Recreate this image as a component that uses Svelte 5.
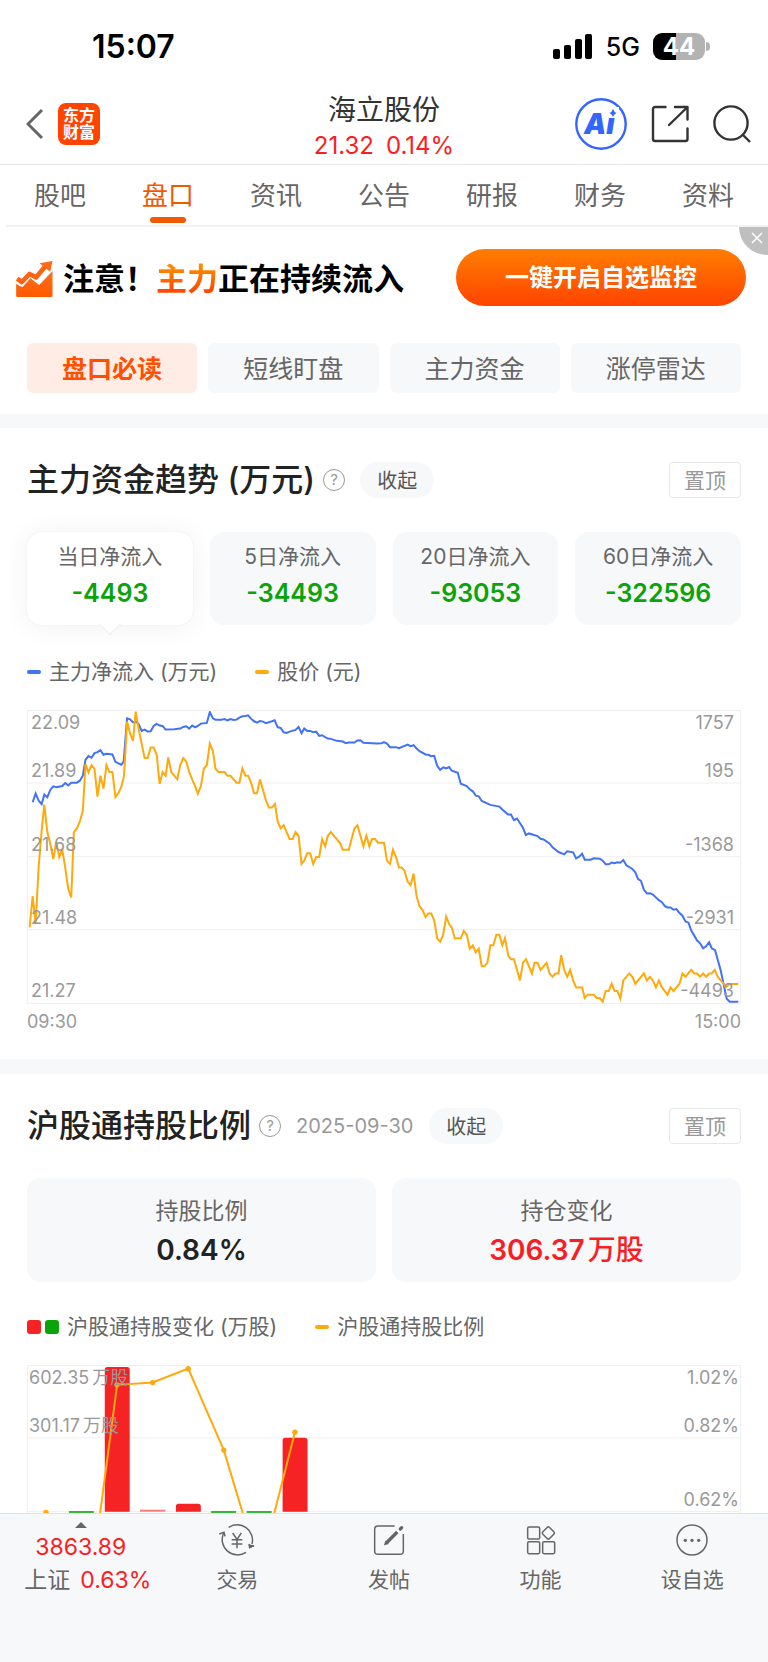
<script>
  const tabs = ['股吧', '盘口', '资讯', '公告', '研报', '财务', '资料'];
  const chips = ['盘口必读', '短线盯盘', '主力资金', '涨停雷达'];
  const flows = [
    { label: '当日净流入', value: '-4493' },
    { label: '5日净流入', value: '-34493' },
    { label: '20日净流入', value: '-93053' },
    { label: '60日净流入', value: '-322596' }
  ];
  let tab = $state('盘口');
  let chip = $state('盘口必读');
  let flow = $state('当日净流入');

  const trendRows = [
    ['21.89', '195'],
    ['21.68', '-1368'],
    ['21.48', '-2931'],
    ['21.27', '-4493']
  ];

  const price =
    '86,682 95,588 104,672 113,500 122,392 130,312 139,394 148,430 157,476 166,424 175,470 184,448 193,502 202,566 211,592 219,395 228,384 237,363 246,331 254,190 263,215 272,193 281,204 290,288 299,225 308,264 317,193 326,214 335,214 344,289 353,278 362,257 370,225 379,62 388,97 397,120 405,32 414,85 423,129 432,172 441,172 450,140 459,140 468,161 477,250 486,214 495,225 503,170 512,214 521,225 530,236 539,193 548,172 557,182 566,214 575,236 584,257 592,279 601,257 610,204 619,193 628,128 637,150 645,204 654,214 672,214 681,225 690,225 708,246 717,246 726,203 735,225 743,225 752,246 761,278 770,278 779,236 788,268 797,300 806,321 815,321 824,310 832,363 841,384 850,374 868,416 877,416 886,395 895,406 904,491 912,481 921,459 930,459 939,491 948,470 957,470 966,416 975,438 983,406 992,395 1019,427 1028,448 1046,448 1063,384 1072,374 1090,438 1099,406 1108,438 1116,416 1125,416 1134,427 1152,427 1161,481 1170,491 1179,448 1188,470 1197,502 1205,502 1214,512 1223,544 1232,555 1241,520 1250,588 1259,619 1268,630 1277,651 1285,640 1294,640 1303,661 1312,715 1321,725 1330,704 1339,650 1348,672 1356,683 1365,715 1383,715 1392,693 1401,704 1410,746 1419,736 1428,757 1437,746 1446,799 1454,799 1463,789 1472,736 1481,736 1490,704 1499,704 1508,736 1516,714 1526,768 1534,778 1543,778 1561,842 1570,789 1579,778 1597,821 1605,789 1614,789 1623,810 1641,789 1650,821 1659,831 1668,821 1677,821 1685,766 1694,810 1703,831 1712,810 1721,842 1730,863 1748,863 1756,895 1765,885 1783,885 1792,895 1801,895 1810,906 1819,874 1828,874 1837,852 1846,874 1854,874 1863,896 1872,842 1890,821 1899,831 1908,852 1934,821 1943,842 1952,831 1961,842 1970,863 1979,842 1988,863 2005,885 2014,863 2023,874 2032,863 2041,852 2050,821 2059,831 2076,810 2085,821 2094,821 2103,831 2112,821 2121,831 2130,821 2138,821 2147,810 2156,831 2165,842 2174,852 2180,863 2192,853 2218,853';

  const inflow =
    '95,305 104,279 113,300 122,311 130,282 139,290 148,268 157,257 166,260 184,256 193,247 202,254 211,246 228,246 237,240 246,225 254,177 263,166 272,171 281,157 290,154 299,148 308,162 317,159 335,161 344,183 353,188 362,192 369,182 379,52 388,55 397,64 408,63 414,70 423,90 432,86 441,92 450,91 459,75 468,69 477,74 486,75 495,86 521,85 539,83 548,78 557,76 566,83 575,74 584,79 592,75 601,68 619,66 628,33 637,52 645,56 663,56 672,54 681,58 690,54 699,57 708,56 717,50 726,46 735,45 743,43 752,53 761,61 770,65 779,60 788,62 797,67 815,61 823,58 832,79 841,81 850,94 859,96 868,92 886,87 895,78 904,97 912,83 921,90 930,90 939,94 948,92 957,105 966,103 975,109 983,113 992,114 1010,120 1028,122 1037,127 1046,125 1063,125 1072,119 1081,118 1090,126 1130,128 1145,127 1152,124 1161,128 1170,139 1188,139 1197,142 1223,131 1232,136 1241,133 1250,143 1259,151 1277,161 1285,162 1294,166 1303,165 1312,195 1321,207 1330,200 1339,203 1348,199 1356,210 1374,216 1383,249 1401,256 1410,266 1419,272 1428,285 1437,287 1446,301 1472,313 1499,318 1508,327 1525,342 1534,342 1543,359 1552,354 1570,382 1579,404 1588,399 1614,407 1623,415 1632,417 1650,429 1659,441 1677,455 1694,462 1703,453 1721,456 1730,474 1739,469 1748,460 1756,478 1774,478 1783,474 1801,475 1810,481 1819,492 1828,492 1837,487 1846,489 1854,486 1863,487 1872,479 1881,495 1899,506 1908,516 1916,536 1925,542 1934,569 1943,580 1952,579 1961,583 1979,600 1988,606 1997,618 2005,622 2014,622 2023,629 2032,627 2041,639 2050,647 2059,664 2068,668 2076,691 2094,722 2103,730 2112,745 2121,739 2130,727 2138,745 2148,751 2165,812 2183,897 2192,906 2218,906';

  const bars = [
    { x: 312, y: 78, tone: 'up' },
    { x: 526, y: 491, tone: 'up' },
    { x: 847, y: 292, tone: 'up' }
  ];
  const flatBars = [
    { x: 204, tone: 'down' },
    { x: 632, tone: 'down' },
    { x: 739, tone: 'down' }
  ];
  const dots = [[135, 517], [349, 132], [456, 125], [563, 83], [670, 329], [884, 275]];
</script>

<div class="app">
  <div class="status">
    <time>15:07</time>
    <div class="signals">
      <svg class="cell" viewBox="0 0 40 26" aria-hidden="true">
        <rect x="0" y="15" width="7" height="10" rx="2" />
        <rect x="11" y="11" width="7" height="14" rx="2" />
        <rect x="22" y="5" width="7" height="20" rx="2" />
        <rect x="32" y="0" width="7" height="25" rx="2" />
      </svg>
      <span class="net">5G</span>
      <span class="battery">44</span>
    </div>
  </div>

  <header class="top">
    <div class="side start">
      <button class="icon" aria-label="返回">
        <svg width="18" height="32" viewBox="0 0 18 32"><path d="M16 2 2 16l14 14" fill="none" stroke="#666" stroke-width="3" /></svg>
      </button>
      <a class="logo" href="#home">东方<br />财富</a>
    </div>
    <div class="stock">
      <h1>海立股份</h1>
      <p><span>21.32</span><span>0.14%</span></p>
    </div>
    <div class="side end">
      <button class="icon" aria-label="智能助手">
        <svg width="52" height="52" viewBox="0 0 52 52">
          <circle cx="26" cy="26" r="24.7" fill="none" stroke="#36f" stroke-width="2.4" />
          <text x="9" y="36" class="ai">Ai</text>
          <rect x="32" y="9" width="12" height="10" fill="#fff" />
          <path d="M38 11q1 3 3.500 4-2.500 1-3.500 4-1-3-3.500-4 2.500-1 3.500-4Z" fill="#36f" />
        </svg>
      </button>
      <button class="icon" aria-label="分享">
        <svg width="38" height="38" viewBox="0 0 38 38" fill="none" stroke="#333" stroke-width="2.4" stroke-linecap="round" stroke-linejoin="round">
          <path d="M14.500 2H4a2 2 0 0 0-2 2v30a2 2 0 0 0 2 2h30.500a2 2 0 0 0 2-2V23.500M24 2h12.500v12.500M36 2.500 18 20" />
        </svg>
      </button>
      <button class="icon" aria-label="搜索">
        <svg width="38" height="38" viewBox="0 0 38 38" fill="none" stroke="#333" stroke-width="2.400">
          <circle cx="18" cy="18" r="16.600" /><path d="m29.500 29.500 7.500 7.500" />
        </svg>
      </button>
    </div>
  </header>

  <nav class="tabs">
    {#each tabs as t}
      <button class:active={t === tab} onclick={() => (tab = t)}>{t}</button>
    {/each}
  </nav>

  <main>
    <div class="banner">
      <svg class="surge" viewBox="48 120 110 108" aria-hidden="true">
        <defs>
          <linearGradient id="surge-fill" x1="0" y1="0" x2="0" y2="1">
            <stop offset="0" stop-color="#ff6d1a" /><stop offset="1" stop-color="#ff5a00" />
          </linearGradient>
        </defs>
        <path d="m51 173 14 10 23-24 20 10 30-36" fill="none" stroke="#ff6210" stroke-width="14" stroke-linejoin="round" />
        <path d="m118 127 39-7-7 32Z" fill="#ff6a18" />
        <path d="M48 188q10 8 19 10l24-26 26 20 40-42v74q0 4-4 4H52q-4 0-4-4Z" fill="url(#surge-fill)" />
      </svg>
      <p>注意！<em>主力</em>正在持续流入</p>
      <button class="cta">一键开启自选监控</button>
      <button class="close" aria-label="关闭">
        <svg width="12" height="12" viewBox="0 0 12 12"><path d="m1 1 10 10M11 1 1 11" stroke="#fff" stroke-width="1.500" /></svg>
      </button>
    </div>

    <div class="chips">
      {#each chips as c}
        <button class:active={c === chip} onclick={() => (chip = c)}>{c}</button>
      {/each}
    </div>

    <section>
      <div class="heading">
        <h2>主力资金趋势 (万元)</h2>
        <button class="help" aria-label="说明">?</button>
        <button class="fold">收起</button>
        <button class="pin">置顶</button>
      </div>
      <div class="flows">
        {#each flows as f}
          <button class:active={f.label === flow} onclick={() => (flow = f.label)}>
            <span>{f.label}</span><strong>{f.value}</strong>
          </button>
        {/each}
      </div>
      <div class="legend">
        <span class="key blue">主力净流入 (万元)</span>
        <span class="key amber">股价 (元)</span>
      </div>
      <div class="plot trend">
        <svg viewBox="81 30 2142 880" preserveAspectRatio="none" aria-hidden="true">
          <path class="rule" d="M81 247h2142M81 469h2142M81 689h2142" />
          <polyline class="line inflow" points={inflow} />
          <polyline class="line price" points={price} />
        </svg>
        <div class="scale">
          <div class="row first"><span>22.09</span><span>1757</span></div>
          {#each trendRows as [left, right]}
            <div class="row"><span>{left}</span><span>{right}</span></div>
          {/each}
        </div>
      </div>
      <div class="times"><span>09:30</span><span>15:00</span></div>
    </section>

    <section>
      <div class="heading">
        <h2>沪股通持股比例</h2>
        <button class="help" aria-label="说明">?</button>
        <time>2025-09-30</time>
        <button class="fold">收起</button>
        <button class="pin">置顶</button>
      </div>
      <dl class="holdings">
        <div><dt>持股比例</dt><dd>0.84%</dd></div>
        <div><dt>持仓变化</dt><dd class="rise">306.37<span class="unit">万股</span></dd></div>
      </dl>
      <div class="legend">
        <span class="key pair"><i></i>沪股通持股变化 (万股)</span>
        <span class="key amber">沪股通持股比例</span>
      </div>
      <div class="plot share">
        <svg viewBox="81 75 2142 444" preserveAspectRatio="none" aria-hidden="true">
          <path class="rule" d="M81 292h2142M81 515h2142" />
          {#each bars as b}
            <path class={b.tone} d="M{b.x} 515V{b.y + 8}q0-8 8-8h59q8 0 8 8V515Z" />
          {/each}
          <rect class="faint" x="418" y="509" width="76" height="6" />
          {#each flatBars as b}
            <rect class={b.tone} x={b.x} y="513" width="75" height="6" opacity="0.8" />
          {/each}
          <path class="line price" d="M298 519 349 132 456 125 563 83 670 329 727 519M822 519 884 275" />
          {#each dots as [x, y]}
            <circle class="dot" cx={x} cy={y} r="8" />
          {/each}
        </svg>
        <div class="scale">
          <div class="row first"><span>602.35<span class="unit">万股</span></span><span>1.02%</span></div>
          <div class="row"><span>301.17<span class="unit">万股</span></span><span>0.82%</span></div>
          <div class="row"><span></span><span>0.62%</span></div>
        </div>
      </div>
    </section>
  </main>

  <footer>
    <button class="index">
      <svg width="12" height="6" viewBox="0 0 12 6"><path d="M0 6 6 0l6 6Z" fill="#666" /></svg>
      <span class="rise">3863.89</span>
      <span class="change">上证<b>0.63%</b></span>
    </button>
    <button>
      <svg viewBox="658 544 108 108">
        <path d="M687 560a46 46 0 0 1 70 50M739 635a46 46 0 0 1-67-58" />
        <path d="m659 580 14-5 3 12M750 620l13-5" />
        <path d="m748 610 2 11 13-6" fill="#666" />
        <path d="m699 577 13 19 13-19M712 596v27M696 597h32M696 610h32" />
      </svg>
      <span>交易</span>
    </button>
    <button>
      <svg viewBox="1114 544 108 108">
        <path d="M1185 556h-50q-10 0-10 10v65q0 10 10 10h66q10 0 10-10v-51" />
        <path d="m1160 607 33-33" stroke-width="10" />
        <path d="m1154 613 4-12 8 8Z" fill="#666" stroke-width="2" />
        <path d="m1202 565 4-4" stroke-width="10" stroke-linecap="round" />
      </svg>
      <span>发帖</span>
    </button>
    <button>
      <svg viewBox="416 544 108 108">
        <rect x="430" y="559" width="36" height="36" rx="4" />
        <rect x="430" y="603" width="36" height="36" rx="4" />
        <rect x="475" y="603" width="36" height="36" rx="4" />
        <rect x="478" y="563" width="28" height="28" rx="4" transform="rotate(45 492 577)" />
      </svg>
      <span>功能</span>
    </button>
    <button>
      <svg viewBox="870 544 108 108">
        <circle cx="924" cy="598" r="45" />
        <g fill="#666" stroke="none"><circle cx="904" cy="599" r="5" /><circle cx="924" cy="599" r="5" /><circle cx="944" cy="599" r="5" /></g>
      </svg>
      <span>设自选</span>
    </button>
  </footer>
</div>

<style>
  :global(body) {
    margin: 0;
    background: #fff;
  }
  .app {
    display: flex;
    flex-direction: column;
    height: 100vh;
    overflow: hidden;
    color: #666;
    font-family: Inter, 'Noto Sans CJK SC', sans-serif;
    font-size: 21px;
  }
  .app * {
    box-sizing: border-box;
  }
  button {
    margin: 0;
    padding: 0;
    border: 0;
    background: none;
    color: inherit;
    font: inherit;
    white-space: nowrap;
    cursor: pointer;
  }
  h1,
  h2,
  p,
  dl,
  dd {
    margin: 0;
  }
  svg {
    display: block;
  }
  main {
    flex: 1;
    min-height: 0;
    overflow: hidden;
  }

  .status {
    display: flex;
    flex: none;
    align-items: center;
    justify-content: space-between;
    height: 85px;
    padding: 8px 63px 0 92px;
    color: #000;
  }
  .status time {
    font-size: 32px;
    font-weight: 600;
  }
  .signals {
    display: flex;
    align-items: center;
    gap: 13px;
  }
  .cell {
    width: 40px;
    height: 26px;
  }
  .net {
    font-size: 25px;
    font-weight: 500;
  }
  .battery {
    position: relative;
    width: 52px;
    height: 27px;
    border-radius: 9px;
    background: linear-gradient(90deg, #000 44%, #b3b3b3 44%);
    color: #fff;
    font-size: 24px;
    font-weight: 700;
    line-height: 27px;
    text-align: center;
  }
  .battery::after {
    content: '';
    position: absolute;
    top: 9px;
    right: -5px;
    width: 4px;
    height: 9px;
    border-radius: 0 4px 4px 0;
    background: #b3b3b3;
  }

  .top {
    display: grid;
    grid-template-columns: 1fr auto 1fr;
    flex: none;
    align-items: center;
    height: 80px;
    padding: 0 17px;
    border-bottom: 1px solid #e6e6e6;
  }
  .side {
    display: flex;
    align-items: center;
    gap: 14px;
    padding-bottom: 2px;
  }
  .start {
    padding-left: 9px;
  }
  .end {
    justify-content: flex-end;
    gap: 24px;
  }
  .logo {
    padding: 4px 5px;
    border-radius: 8px;
    background: #ff4400;
    color: #fff;
    font-size: 16px;
    font-weight: 700;
    line-height: 17px;
    text-decoration: none;
  }
  .ai {
    fill: #36f;
    font-size: 28px;
    font-style: italic;
    font-weight: 900;
  }
  .stock {
    padding-top: 2px;
    text-align: center;
  }
  .stock h1 {
    color: #333;
    font-size: 28px;
    font-weight: 400;
    line-height: 40px;
  }
  .stock p {
    display: flex;
    justify-content: center;
    gap: 12px;
    color: #fa1e24;
    font-size: 24px;
    line-height: 32px;
  }

  .tabs {
    display: grid;
    grid-template-columns: repeat(7, 1fr);
    flex: none;
    height: 62px;
    margin-left: 6px;
    padding-right: 6px;
    border-bottom: 2px solid #f2f2f2;
  }
  .tabs button {
    position: relative;
    padding-bottom: 3px;
    font-size: 26px;
  }
  .tabs .active {
    color: #ef5a00;
  }
  .tabs .active::after {
    content: '';
    position: absolute;
    bottom: 2px;
    left: 50%;
    width: 36px;
    height: 6px;
    margin-left: -18px;
    border-radius: 3px;
    background: #ef5a00;
  }

  .banner {
    position: relative;
    display: flex;
    align-items: center;
    height: 100px;
    padding: 0 22px 0 16px;
  }
  .surge {
    width: 37px;
    height: 36px;
    margin: 3px 10px 0 0;
  }
  .banner p {
    padding-top: 4px;
    color: #000;
    font-size: 31px;
    font-weight: 700;
    line-height: 48px;
    white-space: nowrap;
  }
  .banner em {
    background: linear-gradient(#ff8a00 20%, #ff4a00 80%);
    background-clip: text;
    color: transparent;
    font-style: normal;
  }
  .cta {
    width: 290px;
    height: 57px;
    margin-left: auto;
    padding-bottom: 4px;
    border-radius: 29px;
    background: linear-gradient(#ff7e00, #ff4400);
    color: #fff;
    font-size: 24px;
    font-weight: 700;
  }
  .close {
    position: absolute;
    top: 0;
    right: 0;
    display: grid;
    place-items: center;
    width: 29px;
    height: 28px;
    padding: 0 0 6px 6px;
    border-bottom-left-radius: 28px;
    background: #bfbfbf;
  }

  .chips {
    display: grid;
    grid-template-columns: repeat(4, 1fr);
    gap: 11px;
    padding: 16px 27px 21px;
  }
  .chips button {
    height: 50px;
    padding-bottom: 2px;
    border-radius: 6px;
    background: #f7f8fa;
    font-size: 25px;
  }
  .chips .active {
    background: #ffede5;
    color: #ff5000;
    font-weight: 700;
  }

  section {
    padding: 28px 27px 25px;
    border-top: 14px solid #f7f8fa;
  }
  section + section {
    padding-bottom: 0;
    border-top-width: 15px;
  }
  .heading {
    display: flex;
    align-items: center;
    height: 48px;
  }
  h2 {
    color: #222;
    font-size: 32px;
    font-weight: 500;
    line-height: 48px;
    white-space: nowrap;
  }
  .help {
    width: 22px;
    height: 22px;
    margin: 0 15px 0 8px;
    border: 1px solid #999;
    border-radius: 50%;
    color: #999;
    font-size: 15px;
    line-height: 20px;
  }
  .heading time {
    margin-right: 16px;
    color: #999;
    font-size: 20px;
  }
  .fold {
    height: 36px;
    padding: 0 17px 2px;
    border-radius: 18px;
    background: #f7f8fa;
    color: #555;
    font-size: 20px;
  }
  .pin {
    height: 36px;
    margin-left: auto;
    padding: 0 14px 2px;
    border: 1px solid #e8e8e8;
    border-radius: 4px;
    color: #999;
  }

  .flows {
    display: grid;
    grid-template-columns: repeat(4, 1fr);
    gap: 17px;
    margin-top: 28px;
  }
  .flows button {
    position: relative;
    display: flex;
    flex-direction: column;
    align-items: center;
    gap: 6px;
    padding: 10px 0 17px;
    border-radius: 14px;
    background: #f7f8fa;
    line-height: 30px;
  }
  .flows strong {
    color: #0aa30a;
    font-size: 25px;
    font-weight: 600;
  }
  .flows .active {
    background: #fff;
    box-shadow:
      0 0 1px #ddd,
      0 2px 28px rgb(0 0 0 / 6%);
  }
  .flows .active::after {
    content: '';
    position: absolute;
    bottom: -7px;
    left: 50%;
    width: 15px;
    height: 15px;
    margin-left: -8px;
    border: solid #eee;
    border-width: 0 1px 1px 0;
    background: #fff;
    transform: rotate(45deg);
  }

  .legend {
    display: flex;
    gap: 38px;
    margin: 33px 0 24px;
    line-height: 28px;
  }
  .key {
    display: flex;
    align-items: center;
    gap: 8px;
    white-space: nowrap;
  }
  .key::before {
    content: '';
    width: 14px;
    height: 4px;
    border-radius: 2px;
  }
  .blue::before {
    background: #4272f5;
  }
  .amber::before {
    background: #ffa90c;
  }
  .pair::before,
  .pair i {
    width: 14px;
    height: 14px;
    border-radius: 3px;
    background: #f52323;
  }
  .pair i {
    margin-left: -4px;
    background: #0aa30a;
  }

  .plot {
    display: grid;
    border: solid #efefef;
    border-width: 1px 1px 0;
    color: #999;
    font-size: 18px;
    line-height: 24px;
  }
  .plot > * {
    grid-area: 1 / 1;
    width: 100%;
    height: 100%;
    min-height: 0;
  }
  .trend {
    height: 294px;
    border-bottom-width: 1px;
  }
  .share {
    height: 148px;
  }
  .scale {
    position: relative;
    display: grid;
    padding: 0 6px 0 3px;
  }
  .trend .scale {
    grid-template-rows: 24px 48px 74px 73px 73px;
  }
  .share .scale {
    grid-template-rows: 24px 48px 74px;
    padding: 0 1px;
  }
  .row {
    display: flex;
    align-items: flex-end;
    justify-content: space-between;
  }
  .unit {
    margin-left: 3px;
    font-weight: 500;
  }
  .row .unit {
    font-weight: 400;
  }
  .rule {
    stroke: #efefef;
    stroke-width: 1px;
    vector-effect: non-scaling-stroke;
  }
  .line {
    fill: none;
    stroke-width: 2px;
    vector-effect: non-scaling-stroke;
  }
  .inflow {
    stroke: #4272f5;
  }
  .price {
    stroke: #ffa90c;
  }
  .dot {
    fill: #ffa90c;
  }
  .up {
    fill: #f52323;
  }
  .faint {
    fill: #f87c7c;
  }
  .down {
    fill: #0aa30a;
  }
  .times {
    display: flex;
    justify-content: space-between;
    margin-top: 6px;
    color: #999;
    font-size: 18px;
    line-height: 24px;
  }

  .holdings {
    display: grid;
    grid-template-columns: 1fr 1fr;
    gap: 16px;
    margin-top: 28px;
  }
  .holdings div {
    display: grid;
    gap: 9px;
    padding: 18px 0 17px;
    border-radius: 14px;
    background: #f7f8fa;
    line-height: 30px;
    text-align: center;
  }
  .holdings dt {
    font-size: 23px;
  }
  .holdings dd {
    color: #222;
    font-size: 28px;
    font-weight: 600;
  }
  .holdings + .legend {
    margin-top: 31px;
  }
  .rise,
  .holdings .rise {
    color: #fa1e24;
  }

  footer {
    display: grid;
    grid-template-columns: 162fr repeat(4, 152fr);
    flex: none;
    height: 149px;
    padding: 8px 0 68px;
    border-top: 1px solid #e0e1e5;
    background: #f7f8fa;
  }
  footer button {
    display: flex;
    flex-direction: column;
    align-items: center;
    justify-content: space-between;
    line-height: 28px;
  }
  footer button:not(.index) svg {
    width: 36px;
    height: 36px;
    fill: none;
    stroke: #666;
    stroke-width: 4.500;
  }
  .index {
    font-size: 23px;
  }
  .change {
    display: flex;
    gap: 10px;
    padding-left: 14px;
  }
  .index b {
    color: #fa1e24;
    font-weight: 400;
  }
</style>
